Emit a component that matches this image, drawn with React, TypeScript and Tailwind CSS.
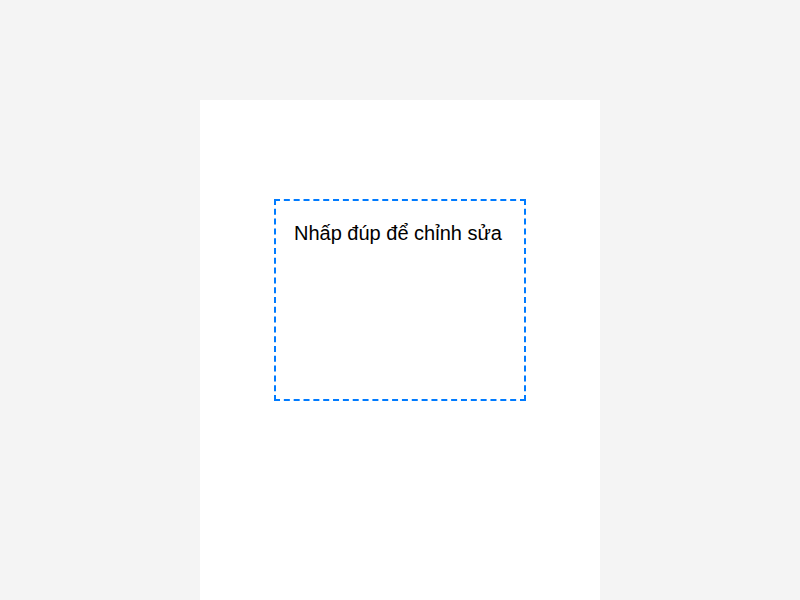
export default function App() {
  return (
    <div className="w-[800px] h-[600px] bg-[#f4f4f4] flex justify-center overflow-hidden" style={{ fontFamily: '"Liberation Sans", Arial, sans-serif' }}>
      <div className="w-[400px] h-[600px] mt-[100px] bg-white flex flex-col items-center shrink-0">
        <div className="mt-[99px] w-[252px] h-[202px] border-2 border-dashed border-[#007bff] pt-[17px] pl-[18px] pr-5 text-[20px] text-black">
          Nhấp đúp để chỉnh sửa
        </div>
      </div>
    </div>
  );
}
